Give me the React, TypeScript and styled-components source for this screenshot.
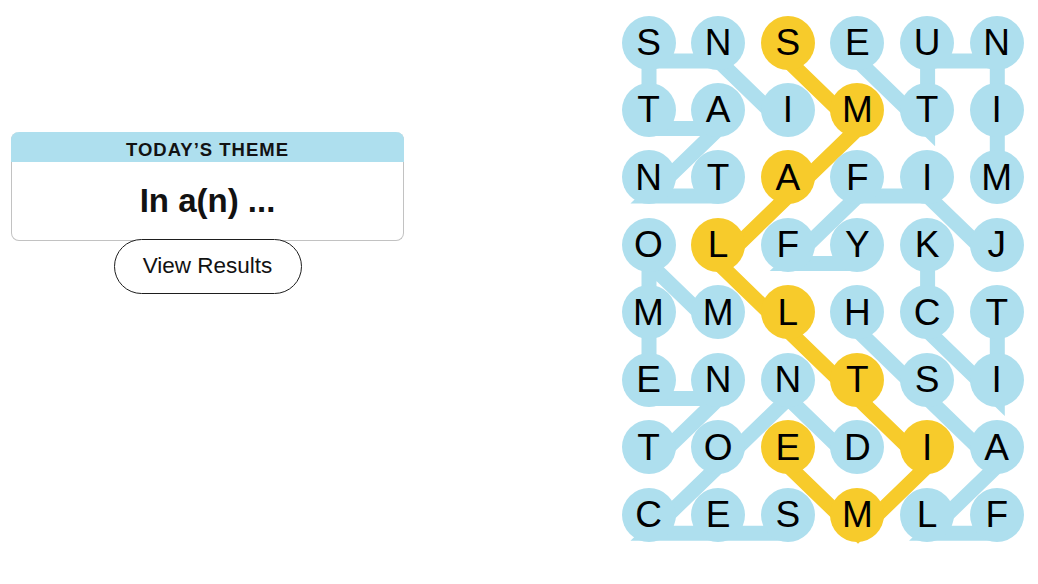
import styled, { createGlobalStyle } from "styled-components";

const GlobalStyle = createGlobalStyle`
    html, body {
        margin: 0;
        padding: 0;
        background: #ffffff;
    }
    body {
        font-family: "Liberation Sans", Arial, sans-serif;
        color: #000000;
    }
`;

const BLUE = "#aedfee";
const YELLOW = "#f7cb2b";

const COLS = 6;
const CELL = 54;
const PITCH_X = 69.65;
const PITCH_Y = 67.47;
// the line layer sits a little lower than the letters
const LINE_SHIFT = 18;

const LETTERS = [
    "SNSEUN",
    "TAIMTI",
    "NTAFIM",
    "OLFYKJ",
    "MMLHCT",
    "ENNTSI",
    "TOEDIA",
    "CESMLF",
];

type Cell = [number, number];

// found words, as [row, col] paths
const WORDS: { path: Cell[]; spangram?: boolean }[] = [
    { path: [[1, 2], [0, 1], [0, 0], [1, 0], [1, 1], [2, 0], [2, 1]] }, // instant
    { path: [[4, 1], [3, 0], [4, 0], [5, 0], [5, 1], [6, 0]] }, // moment
    { path: [[2, 5], [1, 5], [0, 5], [0, 4], [1, 4], [0, 3]] }, // minute
    { path: [[3, 5], [2, 4], [2, 3], [3, 2], [3, 3]] }, // jiffy
    { path: [[4, 5], [5, 5], [4, 4], [3, 4]] }, // tick
    { path: [[7, 5], [7, 4], [6, 5], [5, 4], [4, 3]] }, // flash
    { path: [[7, 2], [7, 1], [7, 0], [6, 1], [5, 2], [6, 3]] }, // second
    {
        path: [[0, 2], [1, 3], [2, 2], [3, 1], [4, 2], [5, 3], [6, 4], [7, 3], [6, 2]],
        spangram: true,
    }, // smalltime
];

const isSpangram = (r: number, c: number) =>
    WORDS.some((w) => w.spangram && w.path.some(([pr, pc]) => pr === r && pc === c));

const toPoints = (path: Cell[]) =>
    path
        .map(([r, c]) => {
            const x = CELL / 2 + c * PITCH_X;
            const y = CELL / 2 + r * PITCH_Y + LINE_SHIFT;
            return `${x.toFixed(1)},${y.toFixed(1)}`;
        })
        .join(" ");

const ThemeCard = () => {
    return (
        <Card>
            <CardHeader>Today’s Theme</CardHeader>
            <CardBody>In a(n) ...</CardBody>
        </Card>
    );
};

const WordLines = () => {
    return (
        <Lines>
            {WORDS.map((w, i) => (
                <polyline
                    key={i}
                    points={toPoints(w.path)}
                    fill="none"
                    stroke={w.spangram ? YELLOW : BLUE}
                    strokeWidth={15}
                    strokeLinejoin="miter"
                    strokeMiterlimit={4}
                />
            ))}
        </Lines>
    );
};

export default function App() {
    return (
        <>
            <GlobalStyle />
            <Page>
                <Side>
                    <ThemeCard />
                    <ResultsButton>View Results</ResultsButton>
                </Side>
                <Board>
                    <WordLines />
                    <LetterGrid>
                        {LETTERS.map((row, r) =>
                            row.split("").map((ch, c) => (
                                <Letter key={`${r}-${c}`} $gold={isSpangram(r, c)}>
                                    {ch}
                                </Letter>
                            ))
                        )}
                    </LetterGrid>
                </Board>
            </Page>
        </>
    );
}

const Page = styled.div`
    display: flex;
    align-items: flex-start;
    width: 1038px;
    height: 584px;
    overflow: hidden;
`;

const Side = styled.div`
    display: flex;
    flex-direction: column;
    align-items: center;
    width: 393px;
    padding: 131.5px 0 0 11px;
`;

const Card = styled.section`
    width: 100%;
    box-sizing: border-box;
    border: 1px solid #c2c2c2;
    border-top: 0;
    border-radius: 8px;
    background: #ffffff;
`;

const CardHeader = styled.header`
    margin: 0 -1px;
    height: 30px;
    line-height: 36px;
    border-radius: 8px 8px 0 0;
    background: ${BLUE};
    text-align: center;
    font-size: 18.5px;
    font-weight: 700;
    letter-spacing: 1px;
    text-transform: uppercase;
    color: #121212;
`;

const CardBody = styled.div`
    height: 78px;
    display: flex;
    align-items: center;
    justify-content: center;
    font-size: 33px;
    font-weight: 700;
    color: #121212;
`;

const ResultsButton = styled.button`
    margin-top: -2px;
    width: 188px;
    height: 55px;
    border: 1px solid #1e1e1e;
    border-radius: 28px;
    background: #ffffff;
    font-family: "Liberation Sans", Arial, sans-serif;
    font-size: 22.5px;
    color: #121212;
    cursor: pointer;
`;

const Board = styled.div`
    position: relative;
    margin: 15.5px 0 0 217.5px;
`;

const Lines = styled.svg`
    position: absolute;
    left: 0;
    top: 0;
    width: 100%;
    height: 100%;
    overflow: visible;
    pointer-events: none;
`;

const LetterGrid = styled.div`
    position: relative;
    display: grid;
    grid-template-columns: repeat(${COLS}, ${CELL}px);
    grid-auto-rows: ${CELL}px;
    column-gap: ${PITCH_X - CELL}px;
    row-gap: ${PITCH_Y - CELL}px;
`;

const Letter = styled.div<{ $gold: boolean }>`
    display: flex;
    align-items: center;
    justify-content: center;
    border-radius: 50%;
    background: ${(p) => (p.$gold ? YELLOW : BLUE)};
    font-size: 37px;
    line-height: 1;
    color: #000000;
    user-select: none;
`;
